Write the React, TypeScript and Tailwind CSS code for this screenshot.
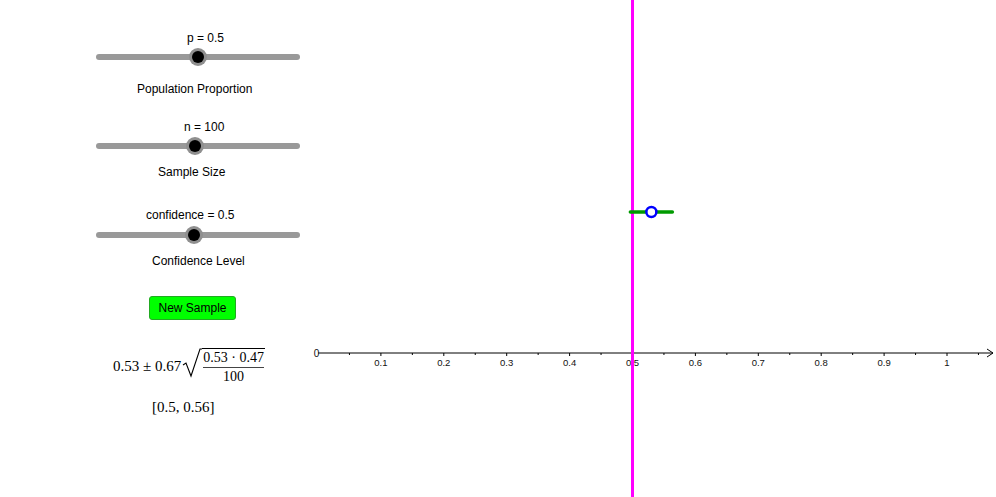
import React from "react";

const ORIGIN = 2; // svg x of 0 on the axis
const UNIT = 629; // px per 1.0
const AXIS_Y = 353;

const toX = (v: number) => ORIGIN + v * UNIT;

type SliderProps = {
  label: string;
  labelLeft: number;
  knobX: number;
};

const SliderTrack = ({ knobX }: { knobX: number }) => (
  <div className="relative ml-[96px] h-[18px] w-[204px]">
    <div className="absolute left-0 right-0 top-[6px] h-[6px] rounded-full bg-[#999999]" />
    <div
      className="absolute top-0 h-[18px] w-[18px] -translate-x-1/2 rounded-full bg-[#8f8f8f] p-[3px]"
      style={{ left: knobX - 96 }}
    >
      <div className="h-full w-full rounded-full bg-black" />
    </div>
  </div>
);

const Line = ({ text, left, mt }: { text: string; left: number; mt: string }) => (
  <div className={`h-[14px] whitespace-nowrap leading-[14px] ${mt}`} style={{ paddingLeft: left }}>
    {text}
  </div>
);

const Slider = ({ label, labelLeft, knobX }: SliderProps) => (
  <>
    <Line text={label} left={labelLeft} mt="mt-0" />
    <div className="mt-[3px]">
      <SliderTrack knobX={knobX} />
    </div>
  </>
);

const Formula = () => (
  <div className="mt-[24px] flex h-[44px] items-center pl-[113px] text-[15px] text-black [font-family:'Liberation_Serif',serif]">
    <span className="whitespace-nowrap">0.53 ± 0.67</span>
    <div className="ml-[1px] flex items-stretch">
      <svg width="20" height="30" viewBox="0 0 20 30" className="mt-[1px]">
        <path d="M1 17 L4 15 L9 28 L18 1 L20 1" fill="none" stroke="black" strokeWidth="1.1" />
      </svg>
      <div className="mt-[1px] flex flex-col items-center border-t border-black px-[1px] text-[14px] leading-[18px]">
        <span className="whitespace-nowrap">0.53 · 0.47</span>
        <span className="w-full border-t border-[#444]" />
        <span>100</span>
      </div>
    </div>
  </div>
);

const Chart = () => {
  const ticks: React.ReactNode[] = [];
  for (let i = 1; i <= 21; i++) {
    const v = i * 0.05;
    const major = i % 2 === 0;
    ticks.push(
      <line
        key={`t${i}`}
        x1={toX(v)}
        x2={toX(v)}
        y1={AXIS_Y}
        y2={AXIS_Y + (major ? 3 : 2)}
        stroke="black"
        strokeWidth="1"
      />
    );
    if (major) {
      const label = i === 20 ? "1" : (i / 20).toFixed(1);
      ticks.push(
        <text key={`l${i}`} x={toX(v)} y={AXIS_Y + 13} fontSize="9.5" textAnchor="middle" fill="#111">
          {label}
        </text>
      );
    }
  }
  const lo = 0.53 - 0.0334;
  const hi = 0.53 + 0.0334;
  return (
    <svg width="680" height="497" className="shrink-0 overflow-visible [font-family:'Liberation_Sans',Arial,sans-serif]">
      <line x1={ORIGIN} x2={677} y1={AXIS_Y} y2={AXIS_Y} stroke="black" strokeWidth="1" />
      <path d="M671 349 L677 353 L671 357" fill="none" stroke="black" strokeWidth="1" />
      <text x={0.5} y={AXIS_Y + 3.5} fontSize="10" textAnchor="middle" fill="#111">
        0
      </text>
      {ticks}
      <line x1={toX(0.5)} x2={toX(0.5)} y1={0} y2={497} stroke="#ff00ff" strokeWidth="3" />
      <line x1={toX(lo)} x2={toX(hi)} y1={212} y2={212} stroke="#009a00" strokeWidth="3.5" strokeLinecap="round" />
      <circle cx={toX(0.53)} cy={212} r={5} fill="white" stroke="#0000ff" strokeWidth="2.5" />
    </svg>
  );
};

export default function App() {
  return (
    <div className="flex h-[497px] w-[996px] overflow-hidden bg-white text-[12px] text-black [font-family:'Liberation_Sans',Arial,sans-serif]">
      <div className="w-[316px] shrink-0 pt-[31px]">
        <Slider label="p = 0.5" labelLeft={187} knobX={198} />
        <Line text="Population Proportion" left={137} mt="mt-[16px]" />
        <div className="mt-[24px]">
          <Slider label="n = 100" labelLeft={184} knobX={195} />
        </div>
        <Line text="Sample Size" left={158} mt="mt-[10px]" />
        <div className="mt-[29px]">
          <Line text="confidence = 0.5" left={146} mt="mt-0" />
          <div className="mt-[4px]">
            <SliderTrack knobX={194} />
          </div>
        </div>
        <Line text="Confidence Level" left={152} mt="mt-[10px]" />
        <div className="mt-[28px] pl-[149px]">
          <button
            type="button"
            className="h-[24px] w-[87px] rounded-[3px] border border-[#22aa22] bg-[#00ff00] text-[12px] text-black"
          >
            New Sample
          </button>
        </div>
        <Formula />
        <div className="mt-[9px] pl-[152px] text-[15px] leading-[20px] [font-family:'Liberation_Serif',serif]">
          [0.5, 0.56]
        </div>
      </div>
      <Chart />
    </div>
  );
}
